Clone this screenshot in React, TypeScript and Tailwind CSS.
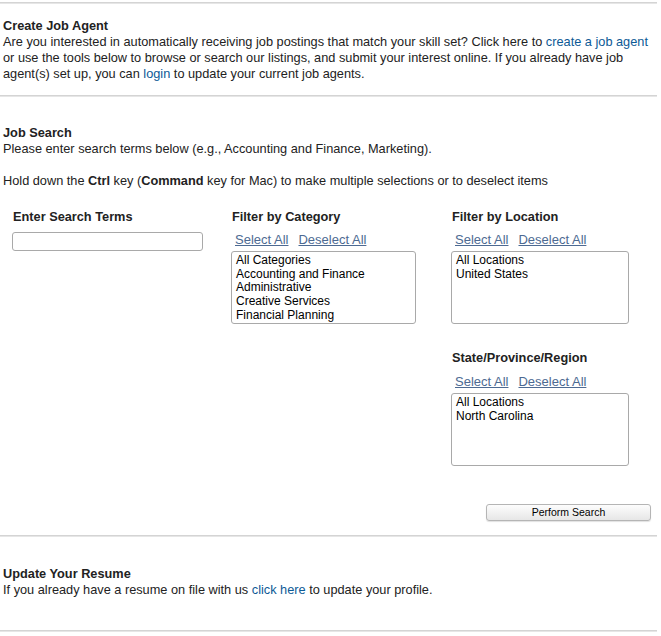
const Rule = () => (
  <div className="mr-[4px] h-[2px] border-t border-[#d4d4d4] bg-[#e6e6e6]" />
);

function FilterLinks() {
  return (
    <div className="ml-[4px] flex h-[16px] gap-[10px] text-[13px] leading-[16px] text-[#4d6a92]">
      <a href="#" className="underline">Select All</a>
      <a href="#" className="underline">Deselect All</a>
    </div>
  );
}

function ListBox({ items, width }: { items: string[]; width: string }) {
  return (
    <div
      className={`${width} mt-[3px] h-[73px] overflow-hidden rounded-[3px] border border-[#a9a9a9] bg-white px-[4px] pt-[2px] text-[12px] leading-[13.7px] text-black`}
    >
      {items.map((it) => (
        <div key={it}>{it}</div>
      ))}
    </div>
  );
}

export default function App() {
  return (
    <div className="bg-white pt-[2px] font-['Liberation_Sans',Arial,sans-serif] text-[12.75px] leading-[16px] text-[#222]">
      <Rule />

      <div className="px-[3px] pt-[14px] pb-[13px]">
        <div className="font-bold">Create Job Agent</div>
        <p>
          Are you interested in automatically receiving job postings that match your skill set? Click here to{" "}
          <a href="#" className="text-[#0d5a96]">create a job agent</a> or use the tools below to browse or search
          our listings, and submit your interest online. If you already have job agent(s) set up, you can{" "}
          <a href="#" className="text-[#0d5a96]">login</a> to update your current job agents.
        </p>
      </div>

      <Rule />

      <div className="px-[3px] pt-[28px]">
        <div className="font-bold">Job Search</div>
        <p>Please enter search terms below (e.g., Accounting and Finance, Marketing).</p>
        <p className="mt-[16px]">
          Hold down the <b>Ctrl</b> key (<b>Command</b> key for Mac) to make multiple selections or to deselect items
        </p>
      </div>

      <div className="grid grid-cols-[219px_220px_1fr] pt-[20px] pl-[12px]">
        <div>
          <div className="pl-[1px] font-bold">Enter Search Terms</div>
          <input
            type="text"
            className="mt-[7px] block h-[19px] w-[191px] rounded-[3px] border border-[#a9a9a9] bg-white px-[3px] text-[12px] outline-none"
          />
        </div>

        <div>
          <div className="pl-[1px] font-bold">Filter by Category</div>
          <div className="mt-[7px]">
            <FilterLinks />
            <ListBox
              width="w-[185px]"
              items={[
                "All Categories",
                "Accounting and Finance",
                "Administrative",
                "Creative Services",
                "Financial Planning",
              ]}
            />
          </div>
        </div>

        <div className="flex flex-col">
          <div className="pl-[1px] font-bold">Filter by Location</div>
          <div className="mt-[7px]">
            <FilterLinks />
            <ListBox width="w-[178px]" items={["All Locations", "United States"]} />
          </div>

          <div className="mt-[26px] pl-[1px] font-bold">State/Province/Region</div>
          <div className="mt-[8px]">
            <FilterLinks />
            <ListBox width="w-[178px]" items={["All Locations", "North Carolina"]} />
          </div>

          <div className="mt-[38px] mr-[10px] flex justify-end">
            <button
              type="button"
              className="h-[17px] w-[165px] rounded-[3px] border border-[#b5b5b5] bg-gradient-to-b from-[#fdfdfd] to-[#e6e6e6] text-[10.5px] leading-[15px] text-black shadow-[0_1px_1px_rgba(0,0,0,0.12)]"
            >
              Perform Search
            </button>
          </div>
        </div>
      </div>

      <div className="pt-[14px]">
        <Rule />
      </div>

      <div className="px-[3px] pt-[29px] pb-[32px]">
        <div className="font-bold">Update Your Resume</div>
        <p>
          If you already have a resume on file with us <a href="#" className="text-[#0d5a96]">click here</a> to update
          your profile.
        </p>
      </div>

      <Rule />
    </div>
  );
}
